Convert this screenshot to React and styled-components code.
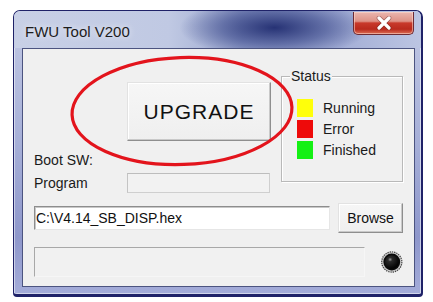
import React from 'react';
import styled, { createGlobalStyle } from 'styled-components';

const GlobalStyle = createGlobalStyle`
  html, body {
    margin: 0;
    padding: 0;
    background: #ffffff;
  }
  body {
    font-family: "Liberation Sans", Arial, sans-serif;
    width: 433px;
    height: 302px;
    overflow: hidden;
  }
`;

const Window = styled.div`
  margin: 10px 0 0 13px;
  width: 410px;
  height: 287px;
  box-sizing: border-box;
  display: flex;
  flex-direction: column;
  border-radius: 7px 7px 4px 4px;
  border: 1px solid #1f2268;
  border-bottom-width: 3px;
  border-right-width: 2px;
  background: linear-gradient(180deg, #c2c9e4 0%, #a7b0d8 45%, #8e97cb 80%, #a4acd9 100%);
  box-shadow: inset 0 0 0 1px rgba(255, 255, 255, 0.5);
  overflow: hidden;
`;

const TitleBar = styled.div`
  height: 37px;
  flex: none;
  display: flex;
  align-items: flex-start;
  justify-content: space-between;
  padding: 0 7px 0 11px;
  background:
    radial-gradient(ellipse 95px 30px at 64% 45%, rgba(32, 44, 112, 0.95) 0%, rgba(58, 72, 138, 0.6) 55%, rgba(120, 135, 190, 0) 100%),
    linear-gradient(90deg, #c8d0e6 0%, #c0c9e3 38%, #9aa6cf 56%, #a3aed6 80%, #bcc5e2 100%);
`;

const Title = styled.span`
  margin-top: 12px;
  font-size: 15px;
  color: #1c1c1c;
  text-shadow: 0 0 6px rgba(255, 255, 255, 0.9);
`;

const CloseButton = styled.div`
  width: 61px;
  height: 23px;
  margin-top: 1px;
  box-sizing: border-box;
  display: flex;
  align-items: center;
  justify-content: center;
  border: 1px solid #6e2b33;
  border-top: none;
  border-radius: 0 0 5px 5px;
  background: linear-gradient(180deg, #eab7b0 0%, #de9286 42%, #c8392b 50%, #b92a1d 78%, #dc6e55 100%);
  box-shadow: inset 0 0 0 1px rgba(255, 220, 210, 0.55);
`;

const Client = styled.div`
  position: relative;
  flex: 1;
  margin: 0 6px 7px 8px;
  box-sizing: border-box;
  border: 1px solid #4c5480;
  background: #f0f0f0;
  padding: 27px 11px 0 11px;
  display: flex;
  flex-direction: column;
`;

const TopRow = styled.div`
  display: flex;
  gap: 11px;
`;

const LeftColumn = styled.div`
  width: 236px;
  display: flex;
  flex-direction: column;
`;

const Upgrade = styled.div`
  margin: 6px 0 0 93px;
  width: 144px;
  height: 59px;
  box-sizing: border-box;
  display: flex;
  align-items: center;
  justify-content: center;
  font-size: 21px;
  letter-spacing: 1px;
  color: #111;
  background: linear-gradient(180deg, #f6f6f6 0%, #efefef 100%);
  border: 1px solid;
  border-color: #e2e2e2 #8e8e8e #8e8e8e #e2e2e2;
  box-shadow: inset -1px -1px 0 #c9c9c9, inset 1px 1px 0 #ffffff;
`;

const Label = styled.div`
  font-size: 14px;
  line-height: 18px;
  color: #1a1a1a;
  margin-top: ${({ top }) => top || 0}px;
`;

const ProgramRow = styled.div`
  display: flex;
  align-items: center;
  margin-top: 4px;
`;

const ProgramLabel = styled(Label)`
  width: 93px;
`;

const DisabledField = styled.div`
  width: 143px;
  height: 20px;
  box-sizing: border-box;
  border: 1px solid #cfcfcf;
  border-top-color: #bdbdbd;
  border-left-color: #c4c4c4;
  background: #f2f2f2;
`;

const Group = styled.div`
  position: relative;
  width: 122px;
  height: 106px;
  box-sizing: border-box;
  border: 1px solid #b9b9b9;
  box-shadow: inset 1px 1px 0 #ffffff, 1px 1px 0 #ffffff;
  padding: 22px 0 0 15px;
  display: grid;
  grid-template-columns: 16px auto;
  grid-auto-rows: 18px;
  row-gap: 3px;
  column-gap: 10px;
  align-items: center;
`;

const Legend = styled.span`
  position: absolute;
  top: -9px;
  left: 8px;
  padding: 0 1px;
  background: #f0f0f0;
  font-size: 14px;
  line-height: 16px;
  color: #1a1a1a;
`;

const Swatch = styled.div`
  width: 16px;
  height: 18px;
  background: ${({ color }) => color};
`;

const StatusText = styled.span`
  font-size: 14px;
  color: #1a1a1a;
  line-height: 18px;
`;

const PathRow = styled.div`
  display: flex;
  align-items: center;
  gap: 8px;
  margin-top: 10px;
`;

const PathInput = styled.div`
  width: 296px;
  height: 24px;
  box-sizing: border-box;
  padding: 0 0 0 1px;
  display: flex;
  align-items: center;
  font-size: 14px;
  color: #111;
  background: #ffffff;
  border: 1px solid;
  border-color: #8d8d8d #e6e6e6 #e6e6e6 #8d8d8d;
  box-shadow: inset 1px 1px 0 #c8c8c8;
`;

const Browse = styled(Upgrade)`
  margin: 0;
  width: 65px;
  height: 30px;
  font-size: 14px;
  letter-spacing: 0;
`;

const BottomRow = styled.div`
  display: flex;
  align-items: center;
  gap: 16px;
  margin-top: 14px;
`;

const Progress = styled.div`
  width: 338px;
  height: 30px;
  box-sizing: border-box;
  border: 1px solid;
  border-color: #a8a8a8 #f6f6f6 #f6f6f6 #a8a8a8;
  background: #f1f1f1;
`;

const Overlay = styled.svg`
  position: absolute;
  left: 0;
  top: 0;
  pointer-events: none;
`;

const statuses = [
  { color: '#ffff0a', text: 'Running' },
  { color: '#ee0a0a', text: 'Error' },
  { color: '#14f014', text: 'Finished' },
];

function Led() {
  return (
    <svg width="22" height="22" viewBox="0 0 22 22">
      <defs>
        <radialGradient id="ledCore" cx="0.38" cy="0.32" r="0.7">
          <stop offset="0" stopColor="#9a9a9a" />
          <stop offset="0.22" stopColor="#2a2a2a" />
          <stop offset="1" stopColor="#000000" />
        </radialGradient>
      </defs>
      <circle cx="11" cy="11" r="10.3" fill="#c8c8c8" stroke="#444" strokeWidth="1.2" strokeDasharray="1.4 0.9" />
      <circle cx="11" cy="11" r="8.6" fill="#0a0a0a" />
      <circle cx="11" cy="11" r="7" fill="url(#ledCore)" />
    </svg>
  );
}

export default function App() {
  return (
    <>
      <GlobalStyle />
      <Window>
        <TitleBar>
          <Title>FWU Tool V200</Title>
          <CloseButton>
            <svg width="16" height="14" viewBox="0 0 16 14">
              <path d="M3 2 L13 12 M13 2 L3 12" stroke="#5a1a1a" strokeWidth="4.6" strokeLinecap="round" opacity="0.45" />
              <path d="M3 2 L13 12 M13 2 L3 12" stroke="#ffffff" strokeWidth="3.2" strokeLinecap="round" />
            </svg>
          </CloseButton>
        </TitleBar>
        <Client>
          <TopRow>
            <LeftColumn>
              <Upgrade>UPGRADE</Upgrade>
              <Label top={10}>Boot SW:</Label>
              <ProgramRow>
                <ProgramLabel>Program</ProgramLabel>
                <DisabledField />
              </ProgramRow>
            </LeftColumn>
            <Group>
              <Legend>Status</Legend>
              {statuses.map((s) => (
                <React.Fragment key={s.text}>
                  <Swatch color={s.color} />
                  <StatusText>{s.text}</StatusText>
                </React.Fragment>
              ))}
            </Group>
          </TopRow>
          <PathRow>
            <PathInput>C:\V4.14_SB_DISP.hex</PathInput>
            <Browse>Browse</Browse>
          </PathRow>
          <BottomRow>
            <Progress />
            <Led />
          </BottomRow>
          <Overlay width="393" height="239">
            <ellipse cx="159" cy="62" rx="110" ry="53.5" fill="none" stroke="#e3141c" strokeWidth="3.2" transform="rotate(-2 159 62)" />
          </Overlay>
        </Client>
      </Window>
    </>
  );
}
